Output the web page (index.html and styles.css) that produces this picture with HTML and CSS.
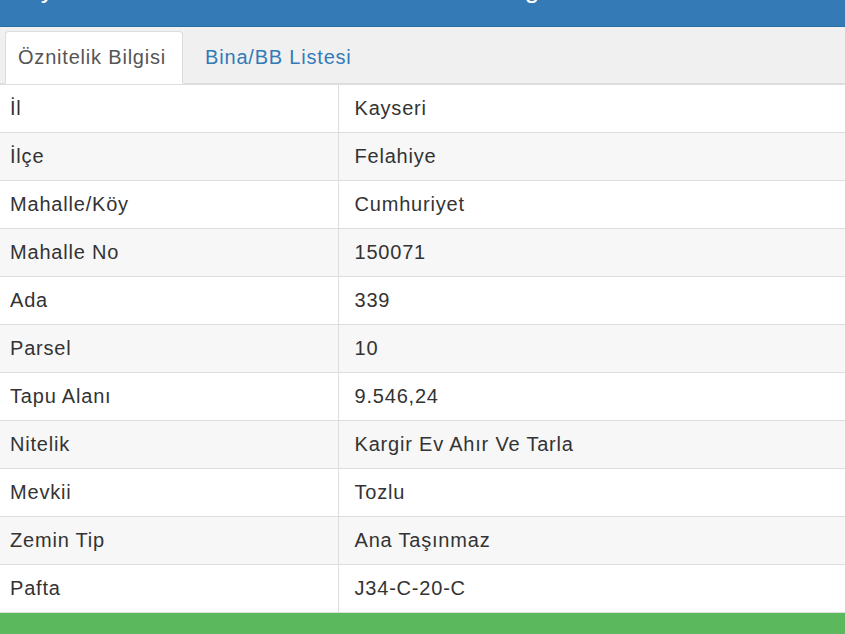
FILE: index.html
```html
<!DOCTYPE html>
<html lang="tr">
<head>
    <meta charset="UTF-8">
    <meta name="viewport" content="width=device-width, initial-scale=1.0">
    <title>Parsel Sorgu</title>
    <link rel="stylesheet" href="styles.css">
</head>
<body>
    <div class="panel-heading">
        <h3 class="panel-title">Ay<span class="gap"></span>Bilgi</h3>
    </div>

    <ul class="nav-tabs">
        <li class="active"><a href="#">Öznitelik Bilgisi</a></li>
        <li><a href="#">Bina/BB Listesi</a></li>
    </ul>

    <table class="info-table">
        <tr><td>İl</td><td>Kayseri</td></tr>
        <tr><td>İlçe</td><td>Felahiye</td></tr>
        <tr><td>Mahalle/Köy</td><td>Cumhuriyet</td></tr>
        <tr><td>Mahalle No</td><td>150071</td></tr>
        <tr><td>Ada</td><td>339</td></tr>
        <tr><td>Parsel</td><td>10</td></tr>
        <tr><td>Tapu Alanı</td><td>9.546,24</td></tr>
        <tr><td>Nitelik</td><td>Kargir Ev Ahır Ve Tarla</td></tr>
        <tr><td>Mevkii</td><td>Tozlu</td></tr>
        <tr><td>Zemin Tip</td><td>Ana Taşınmaz</td></tr>
        <tr><td>Pafta</td><td>J34-C-20-C</td></tr>
    </table>

    <div class="panel-footer"></div>
</body>
</html>
```

FILE: styles.css
```css
body {
    font-family: "Liberation Sans", Arial, sans-serif;
    font-size: 20px;
    letter-spacing: 0.8px;
    color: #333;
    margin: 0;
    padding: 0;
    background: white;
}
.panel-heading {
    background: #337ab7;
    height: 26px;
    overflow: hidden;
    border-bottom: 1px solid #2e6da4;
}
.panel-title {
    margin: -25px 0 0 24px;
    font-size: 26px;
    font-weight: normal;
    letter-spacing: 0;
    line-height: 28px;
    color: white;
}
.panel-title .gap {
    display: inline-block;
    width: 442px;
}
.nav-tabs {
    display: flex;
    gap: 9px;
    list-style: none;
    margin: 0;
    padding: 4px 0 0 5px;
    background: #f0f0f0;
    border-bottom: 1px solid #ddd;
}
.nav-tabs li {
    margin-bottom: -1px;
}
.nav-tabs a {
    display: block;
    padding: 14px 16px 15px 12px;
    line-height: 22px;
    color: #337ab7;
    text-decoration: none;
    border: 1px solid transparent;
    border-radius: 4px 4px 0 0;
}
.nav-tabs .active a {
    color: #555;
    background: white;
    border-color: #ddd #ddd transparent #ddd;
}
.info-table {
    width: 100%;
    border-collapse: collapse;
}
.info-table td {
    padding: 12px 10px;
    line-height: 23px;
    border-top: 1px solid #ddd;
}
.info-table td:first-child {
    width: 40%;
    border-right: 1px solid #ddd;
}
.info-table td:last-child {
    padding-left: 16px;
}
.info-table tr:nth-child(even) td {
    background: #f7f7f7;
}
.panel-footer {
    background: #5cb85c;
    height: 22px;
    border-top: 1px solid #ddd;
}
```
